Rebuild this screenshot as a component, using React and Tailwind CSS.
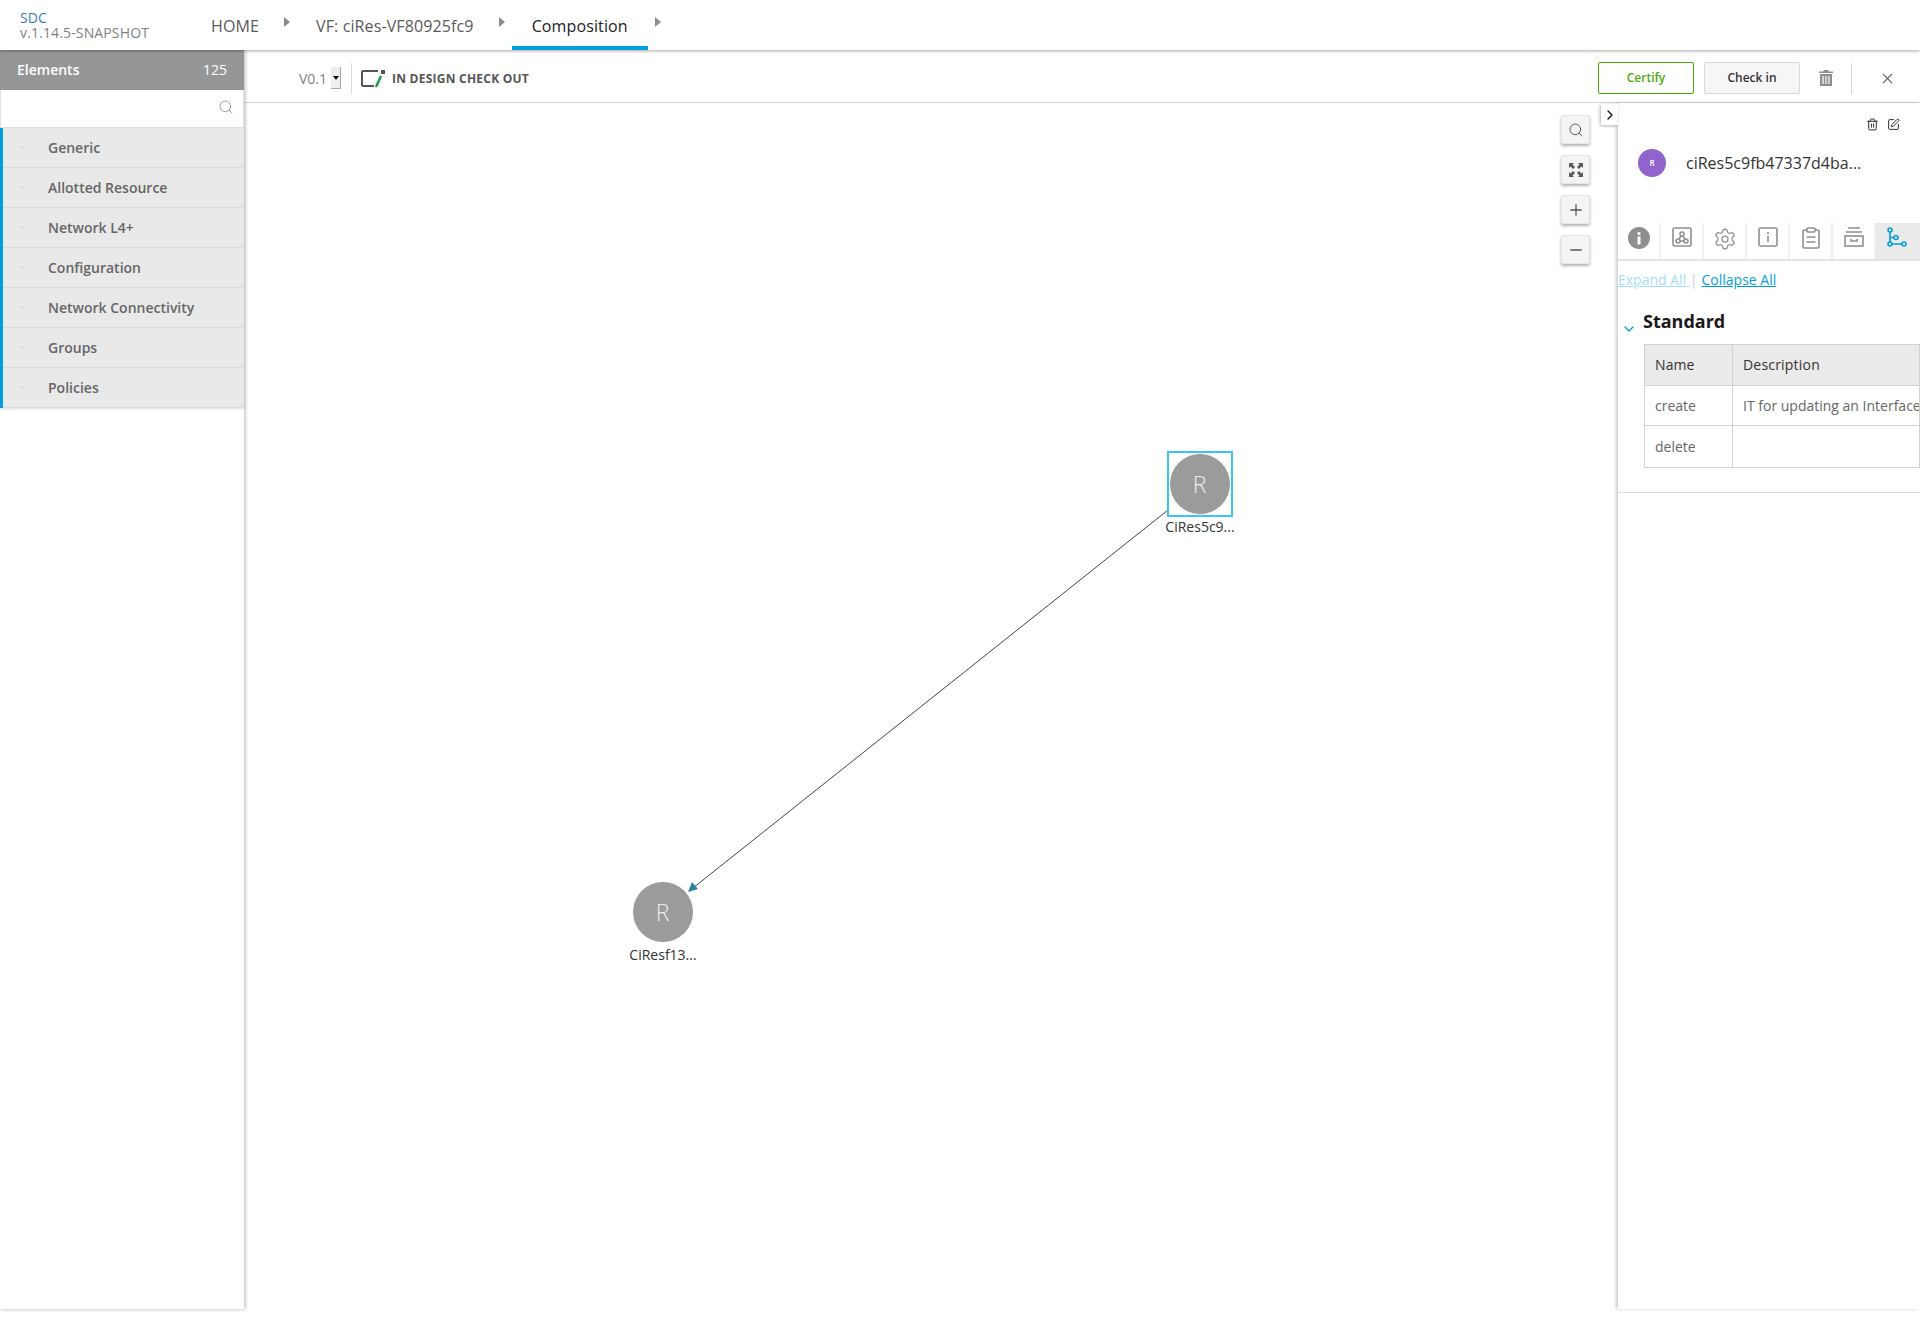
import { Search, X, SquarePen, Trash2, ChevronRight, ChevronDown, Plus, Minus, Settings } from 'lucide-react';

const GROUPS = ['Generic', 'Allotted Resource', 'Network L4+', 'Configuration', 'Network Connectivity', 'Groups', 'Policies'];

const Crumb = () => (
  <svg width="6" height="10" viewBox="0 0 6 10" className="mt-[-6px]"><path d="M0 0l6 5-6 5z" fill="#8c8c8c" /></svg>
);

const ZoomButton = ({ children }) => (
  <div className="w-[29px] h-[29px] flex items-center justify-center bg-[#f4f4f4] border border-[#e4e4e4] rounded-[2px] shadow-[0_2px_3px_rgba(0,0,0,0.3)] text-[#5a5a5a]">
    {children}
  </div>
);

const Node = ({ className, label, selected }) => (
  <div className={`absolute w-[66px] flex flex-col items-center ${className}`}>
    <div className={`w-[66px] h-[66px] flex items-center justify-center border-2 ${selected ? 'border-[#3fc1f5]' : 'border-transparent'}`}>
      <div className="w-[60px] h-[60px] rounded-full bg-[#9b9b9b] flex items-center justify-center pr-[1px] text-white/80 text-[23px] font-light">R</div>
    </div>
    <div className="text-[14px] leading-[20px] text-[#333] whitespace-nowrap">{label}</div>
  </div>
);

const TabCell = ({ children, active, last }) => (
  <div className={`w-[43px] h-full flex items-start justify-center pt-[4px] ${last ? '' : 'border-r-2 border-[#f0f0f0]'} ${active ? 'bg-[#eaeaea] flex-1' : ''}`}>
    {children}
  </div>
);

const App = () => {
  return (
    <div className="w-[1920px] h-[1319px] flex flex-col overflow-hidden bg-white font-['Open_Sans',sans-serif]">
      {/* top nav */}
      <header className="relative z-20 h-[50px] shrink-0 flex bg-white shadow-[0_1px_3px_rgba(0,0,0,0.35)]">
        <div className="w-[211px] pl-[20px] pt-[10px] text-[14px] leading-[15px] tracking-[0.14px]">
          <div className="text-[#3a7cb8]">SDC</div>
          <div className="text-[#7f7f7f]">v.1.14.5-SNAPSHOT</div>
        </div>
        <div className="flex items-center text-[16px] text-[#5a5a5a] h-full tracking-[0.12px]">
          <span className="pt-[1px]">HOME</span>
          <span className="ml-[25px] mr-[26px]"><Crumb /></span>
          <span className="pt-[1px]">VF: ciRes-VF80925fc9</span>
          <span className="ml-[25px] mr-[7px]"><Crumb /></span>
          <span className="h-full px-[20px] pt-[5px] flex items-center text-[#222] border-b-4 border-[#009fdb]">Composition</span>
          <span className="ml-[7px]"><Crumb /></span>
        </div>
      </header>

      <div className="flex-1 flex min-h-0 pb-[10px]">
        {/* elements palette */}
        <aside className="relative z-10 w-[244px] shrink-0 bg-white shadow-[1px_0_4px_rgba(0,0,0,0.3)]">
          <div className="h-[40px] bg-[#969696] flex items-center justify-between px-[17px] pb-[2px] text-white text-[14px] font-semibold">
            <span>Elements</span>
            <span className="font-normal">125</span>
          </div>
          <div className="h-[38px] flex items-center justify-end pr-[9px] pb-[4px] bg-white border border-[#e0e0e0] border-t-0">
            <Search size={16} strokeWidth={1.25} className="text-[#8a8a8a]" />
          </div>
          <div className="border-l-[3px] border-[#009fdb] shadow-[0_1px_2px_rgba(0,0,0,0.15)]">
            {GROUPS.map((group) => (
              <div key={group} className="h-[40px] flex items-center bg-[#e9e9e9] border-b border-[#dcdcdc] text-[14px] font-semibold text-[#666]">
                <ChevronDown size={5} className="ml-[16px] mr-[24px] text-[#8a8a8a]" />
                {group}
              </div>
            ))}
          </div>
        </aside>

        <main className="flex-1 flex flex-col min-w-0">
          {/* toolbar */}
          <div className="h-[53px] shrink-0 flex items-center border-b border-[#d4d4d4] pl-[55px] pr-[24px] pt-[4px]">
            <span className="text-[14px] text-[#7f7f7f]">V0.1</span>
            <div className="ml-[4px] w-[10px] h-[22px] bg-[#eeeeee] border-r border-b border-[#aaa] flex items-center justify-center">
              <svg width="6" height="4" viewBox="0 0 6 4"><path d="M0 0h6L3 4z" fill="#111" /></svg>
            </div>
            <div className="ml-[10px] w-px h-[31px] bg-[#dcdcdc]" />
            <svg width="25" height="19" viewBox="0 0 25 19" className="ml-[9px]">
              <path d="M17 2H2a1 1 0 0 0-1 1v13a1 1 0 0 0 1 1h11" fill="none" stroke="#555" strokeWidth="2" />
              <rect x="20" y="1" width="4" height="4" fill="#555" />
              <path d="M20 7l-5 11" stroke="#1f9a4c" strokeWidth="2.5" />
            </svg>
            <span className="ml-[6px] mt-[1px] text-[12px] font-bold text-[#555] tracking-[0.24px]">IN DESIGN CHECK OUT</span>
            <div className="ml-auto w-[96px] h-[32px] flex items-center justify-center border border-[#4ca90c] rounded-[2px] text-[12px] font-semibold text-[#4ca90c]">Certify</div>
            <div className="ml-[10px] w-[96px] h-[32px] flex items-center justify-center bg-[#f6f6f6] border border-[#d8d8d8] rounded-[2px] text-[12px] font-semibold text-[#333]">Check in</div>
            <svg width="14" height="16" viewBox="0 0 14 16" className="ml-[19px]" fill="#8f8f8f">
              <path d="M4.500 0h5v1.500H14V3H0V1.500h4.500zM1 4h12v12H1zM3.500 6v8h1.200V6zm2.900 0v8h1.200V6zm2.900 0v8h1.200V6z" />
            </svg>
            <div className="ml-[18px] w-px h-[31px] bg-[#d8d8d8]" />
            <X size={17} strokeWidth={1.5} className="ml-[27px] text-[#666]" />
          </div>

          <div className="flex-1 flex min-h-0">
            {/* canvas */}
            <div className="relative flex-1 min-w-0">
              <svg className="absolute inset-0 w-full h-full">
                <line x1="924" y1="407" x2="449" y2="785" stroke="#444" strokeWidth="1" />
                <path d="M444 789l4-10 6 7z" fill="#2f7fa5" />
              </svg>
              <Node className="left-[923px] top-[348px]" label="CiRes5c9..." selected />
              <Node className="left-[386px] top-[776px]" label="CiResf13..." />
              <div className="absolute left-[1317px] top-[12px] flex flex-col gap-[11px]">
                <ZoomButton><Search size={16} strokeWidth={1.5} /></ZoomButton>
                <ZoomButton>
                  <svg width="16" height="16" viewBox="0 0 16 16" fill="currentColor">
                    <path d="M1 1h5L4.500 2.500 7 5 5 7 2.500 4.500 1 6zM15 1v5l-1.500-1.500L11 7 9 5l2.500-2.500L10 1zM15 15h-5l1.500-1.500L9 11l2-2 2.500 2.500L15 10zM1 15v-5l1.500 1.500L5 9l2 2-2.500 2.500L6 15z" />
                  </svg>
                </ZoomButton>
                <ZoomButton><Plus size={18} strokeWidth={1.75} /></ZoomButton>
                <ZoomButton><Minus size={18} strokeWidth={1.75} /></ZoomButton>
              </div>
              <div className="absolute right-0 top-[1px] w-[17px] h-[21px] flex items-center justify-center bg-white shadow-[-1px_1px_3px_rgba(0,0,0,0.3)]">
                <ChevronRight size={16} strokeWidth={2} className="text-[#111]" />
              </div>
            </div>

            {/* details panel */}
            <aside className="w-[302px] shrink-0 flex flex-col bg-white shadow-[-2px_0_3px_rgba(0,0,0,0.2)]">
              <div className="h-[120px] shrink-0 relative">
                <div className="absolute right-[20px] top-[15px] flex gap-[8px] text-[#222]">
                  <Trash2 size={13} strokeWidth={1.75} />
                  <SquarePen size={13} strokeWidth={1.75} />
                </div>
                <div className="flex items-center pt-[46px] pl-[20px]">
                  <div className="w-[28px] h-[28px] rounded-full bg-[#9063cd] flex items-center justify-center text-white text-[8px] font-semibold">R</div>
                  <span className="ml-[20px] text-[16px] text-[#333]">ciRes5c9fb47337d4ba...</span>
                </div>
              </div>
              <div className="h-[38px] shrink-0 flex border-b-2 border-[#e4e4e4]">
                <TabCell>
                  <svg width="22" height="22" viewBox="0 0 22 22">
                    <circle cx="11" cy="11" r="11" fill="#8f8f8f" />
                    <rect x="9.500" y="5" width="3" height="3" rx="1" fill="#fff" />
                    <rect x="9.500" y="9.500" width="3" height="8" fill="#fff" />
                  </svg>
                </TabCell>
                <TabCell>
                  <svg width="20" height="20" viewBox="0 0 20 20" fill="none" stroke="#8f8f8f" strokeWidth="1.6">
                    <rect x="1" y="1" width="18" height="18" rx="1.500" />
                    <circle cx="10" cy="7" r="2" />
                    <circle cx="6" cy="14" r="2" />
                    <circle cx="14" cy="14" r="2" />
                    <path d="M9 9l-2 3M11 9l2 3M8 14h4" />
                  </svg>
                </TabCell>
                <TabCell>
                  <Settings size={24} strokeWidth={1.25} className="text-[#8f8f8f]" />
                </TabCell>
                <TabCell>
                  <svg width="20" height="20" viewBox="0 0 20 20" fill="none" stroke="#8f8f8f" strokeWidth="1.6">
                    <rect x="1" y="1" width="18" height="18" rx="1.500" />
                    <path d="M10 5v2M10 9v6" />
                  </svg>
                </TabCell>
                <TabCell>
                  <svg width="18" height="22" viewBox="0 0 18 22" fill="none" stroke="#8f8f8f" strokeWidth="1.6">
                    <path d="M5 3H2.500A1.500 1.500 0 0 0 1 4.500V19.500A1.500 1.500 0 0 0 2.500 21h13a1.500 1.500 0 0 0 1.500-1.500V4.500A1.500 1.500 0 0 0 15.500 3H13" />
                    <rect x="5" y="1" width="8" height="4" rx="1" />
                    <path d="M4.500 10h9M4.500 15h9" />
                  </svg>
                </TabCell>
                <TabCell>
                  <svg width="20" height="20" viewBox="0 0 20 20" fill="none" stroke="#8f8f8f" strokeWidth="1.6">
                    <path d="M4 1h12M2 5h16" />
                    <rect x="1" y="9" width="18" height="10" />
                    <path d="M7 12v2h6v-2" />
                  </svg>
                </TabCell>
                <TabCell active last>
                  <svg width="20" height="21" viewBox="0 0 20 21" fill="none" stroke="#009fdb" strokeWidth="1.6" className="mr-[2px]">
                    <circle cx="3" cy="3" r="2" />
                    <circle cx="3" cy="17" r="2" />
                    <circle cx="9" cy="10.500" r="2" />
                    <circle cx="17" cy="17" r="2" />
                    <path d="M3 5v10M5 17h10M3 10.500h4" />
                  </svg>
                </TabCell>
              </div>
              <div className="h-[40px] shrink-0 flex items-center pb-[3px] text-[14px]">
                <span className="text-[#a5def5] underline">Expand All&nbsp;</span>
                <span className="mr-[1px] text-[#cfcfcf]">|</span>
                <span className="ml-[3px] text-[#009fdb] underline">Collapse All</span>
              </div>
              <div className="h-[192px] shrink-0 border-b border-[#dcdcdc] relative pl-[25px] pt-[8px]">
                <ChevronDown size={16} strokeWidth={2} className="absolute left-[3px] top-[20px] text-[#009fdb]" />
                <div className="text-[18px] leading-[24px] font-bold text-[#191919]">Standard</div>
                <div className="mt-[11px] ml-[1px] grid grid-cols-[88px_1fr] grid-rows-3 h-[124px] border border-[#d2d2d2] text-[14px]">
                  <div className="flex items-center pl-[10px] bg-[#eaeaea] text-[#333] border-r border-b border-[#d2d2d2] tracking-[0.1px]">Name</div>
                  <div className="flex items-center pl-[10px] bg-[#eaeaea] text-[#333] border-b border-[#d2d2d2] tracking-[0.2px]">Description</div>
                  <div className="flex items-center pl-[10px] text-[#666] border-r border-b border-[#d2d2d2]">create</div>
                  <div className="flex items-center pl-[10px] text-[#666] border-b border-[#d2d2d2] whitespace-nowrap overflow-hidden">IT for updating an Interface</div>
                  <div className="flex items-center pl-[10px] text-[#666] border-r border-[#d2d2d2]">delete</div>
                  <div />
                </div>
              </div>
            </aside>
          </div>
        </main>
      </div>
    </div>
  );
};

export default App;
